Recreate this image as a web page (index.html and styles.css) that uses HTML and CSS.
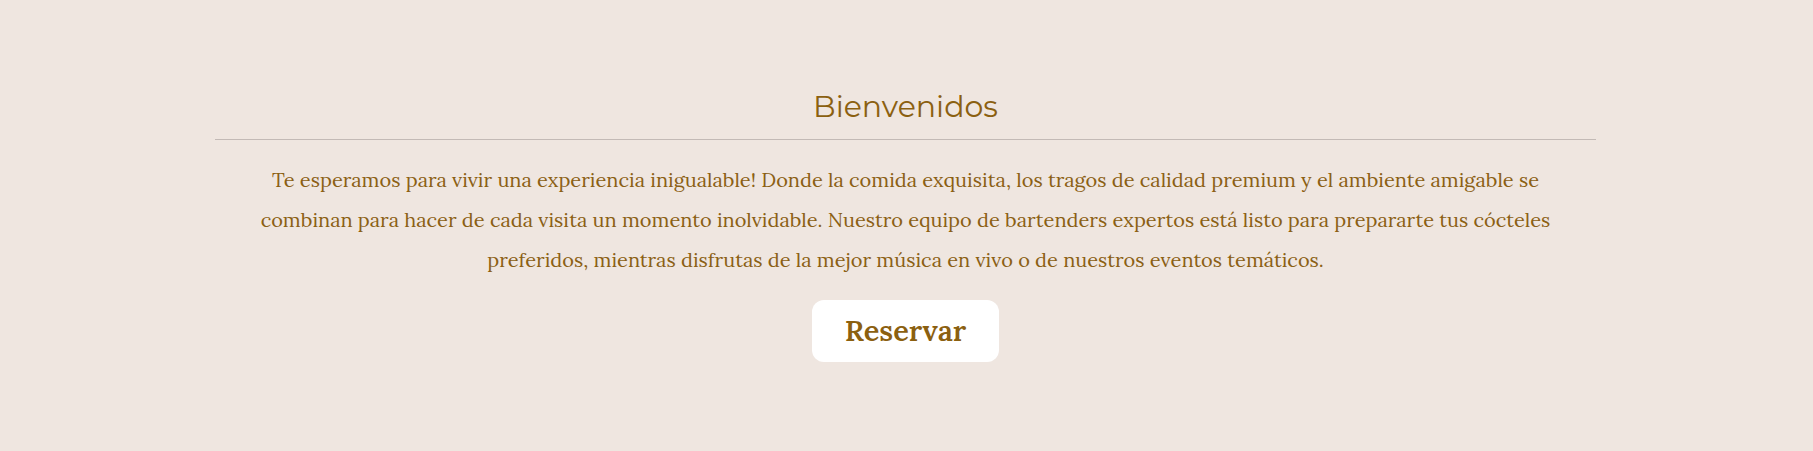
FILE: index.html
```html
<!DOCTYPE html>
<html lang="es">
<head>
<meta charset="utf-8">
<meta name="viewport" content="width=device-width, initial-scale=1">
<title>Bienvenidos</title>
<link rel="stylesheet" href="styles.css">
</head>
<body>
<main class="welcome">
  <section class="welcome-inner">
    <h1 class="welcome-title">Bienvenidos</h1>
    <p class="welcome-text">Te esperamos para vivir una experiencia inigualable! Donde la comida exquisita, los tragos de calidad premium y el ambiente amigable se combinan para hacer de cada visita un momento inolvidable. Nuestro equipo de bartenders expertos está listo para prepararte tus cócteles preferidos, mientras disfrutas de la mejor música en vivo o de nuestros eventos temáticos.</p>
    <button class="reserve" type="button">Reservar</button>
  </section>
</main>
</body>
</html>
```
FILE: styles.css
```css
* {
  box-sizing: border-box;
}

body {
  margin: 0;
  min-height: 100vh;
  background: #efe6e0;
  color: #8b6014;
  font-family: Lora, "Liberation Serif", serif;
}

.welcome {
  padding: 84px 26px 84px 24px;
}

.welcome-inner {
  display: flex;
  flex-direction: column;
  align-items: center;
  max-width: 1381px;
  margin: 0 auto;
  text-align: center;
}

.welcome-title {
  width: 100%;
  margin: 0;
  padding-bottom: 9px;
  border-bottom: 1px solid #c3bab6;
  color: #8b6010;
  font-family: Montserrat, Inter, sans-serif;
  font-size: 30px;
  font-weight: 400;
  line-height: 46px;
}

.welcome-text {
  margin: 20px 0;
  padding: 0 40px;
  font-size: 20px;
  line-height: 40px;
}

.reserve {
  padding: 8px 33px;
  border: 0;
  border-radius: 12px;
  background: #fff;
  color: #8b6010;
  font: 600 29px/46px Lora, "Liberation Serif", serif;
  cursor: pointer;
}
```
